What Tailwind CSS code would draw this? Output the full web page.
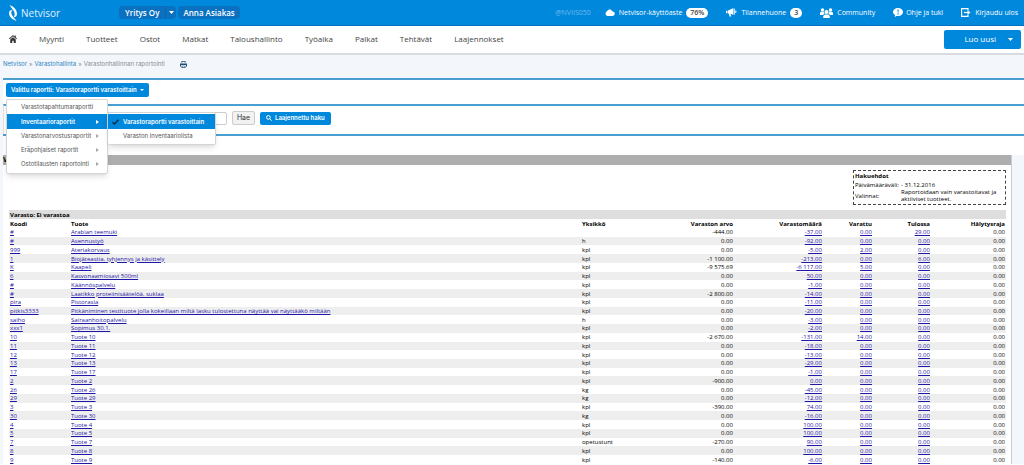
<!DOCTYPE html>
<html lang="fi">
<head>
<meta charset="utf-8">
<title>Netvisor</title>
<script src="https://cdn.jsdelivr.net/npm/@tailwindcss/browser@4"></script>
</head>
<body class="h-screen overflow-hidden bg-white font-['Open_Sans','Noto_Sans',sans-serif] text-[#444]">
<header class="flex h-[26px] items-center border-b border-[#0a6fbd] bg-[#0088dd] pr-[6px] pl-[9px] text-[7px] text-white">
  <a href="#" class="flex w-[110px] items-center gap-1 text-[10px] leading-none text-[#e0f2ff]">
    <svg class="h-[16px] w-[8px]" viewBox="0 0 8 16" fill="#fff"><path d="M.5 0C5 1.500 8 5 8 9c0 2-1.500 3.300-3.500 3.300C6 10.500 6 8.500 5 6.500 4 4.500 2 2.500.5 0z"/><path d="M7.500 16C3 14.500 0 11.500 0 8c0-2 1.500-3.300 3.500-3.300C2 6.500 2 8 3 10c1 2 3 3.700 4.500 6z"/></svg>
    <span>Netvisor</span>
  </a>
  <div class="flex h-[13px] gap-[2px] text-[8px] leading-[13px] font-semibold">
    <div class="flex">
      <button class="rounded-l-sm bg-[#0a70c0] px-[6px]">Yritys Oy</button>
      <button aria-label="Vaihda yritys" class="flex w-[11px] items-center justify-center rounded-r-sm border-l border-[#0a66b0] bg-[#0a70c0]"><svg class="h-[3px] w-[5px]" viewBox="0 0 5 3"><path d="M0 0h5L2.500 3z" fill="#fff"/></svg></button>
    </div>
    <button class="rounded-sm bg-[#0a70c0] px-[5px]">Anna Asiakas</button>
  </div>
  <nav class="ml-auto flex items-center gap-[18px] leading-[10px] whitespace-nowrap" aria-label="Tili">
    <span class="-mr-[4px] text-[#6ebcee]">@NVIIS050</span>
    <a href="#" class="flex items-center gap-[4px]"><svg class="h-[7px] w-[10px]" viewBox="0 0 20 14" fill="#fff"><path d="M5 14a5 5 0 0 1-1-9.500A5.500 5.500 0 0 1 14 4a4.500 4.500 0 0 1 2 .8A4.700 4.700 0 0 1 15.500 14z"/></svg>Netvisor-käyttöaste<span class="rounded-full bg-white px-[4px] font-semibold text-[#444]">76%</span></a>
    <a href="#" class="flex items-center gap-[4px]"><svg class="h-[9px] w-[11px]" viewBox="0 0 22 18" fill="#fff"><path d="M0 5.500h3v5H0zM4 5l10-4.500v13L9 11.500l1.500 5.500H7L5.500 11H4zM15 1h2.500v12.500H15z"/><path d="M18.500 5a2.500 2.500 0 0 1 0 5z"/></svg>Tilannehuone<span class="rounded-full bg-white px-[4px] font-semibold text-[#444]">3</span></a>
    <a href="#" class="flex items-center gap-[4px]"><svg class="h-[10px] w-[13px]" viewBox="0 0 26 20" fill="#fff"><circle cx="5" cy="4" r="3.500"/><circle cx="21" cy="4" r="3.500"/><circle cx="13" cy="8" r="4"/><path d="M0 14V9l3-1.500h4.500L9 11l-3 3zM26 14V9l-3-1.500h-4.500L17 11l3 3zM6.500 20v-4l3-3h7l3 3v4z"/></svg>Community</a>
    <a href="#" class="flex items-center gap-[3px]"><svg class="h-[9px] w-[10px]" viewBox="0 0 20 18"><path fill="#fff" d="M10 0c6 0 10 3.500 10 8s-4 8-9 8c-1 0-2 0-3-.3L3.500 18l.7-4.200C1.500 12.500 0 10.500 0 8c0-4.500 4.500-8 10-8z"/><path fill="#0088dd" d="M9 3h2.400l-.4 6H9.400zM9 10.500h2.400V13H9z"/></svg>Ohje ja tuki</a>
    <a href="#" class="flex items-center gap-[4px]"><svg class="h-[9px] w-[10px]" viewBox="0 0 20 18" fill="none" stroke="#fff" stroke-width="2.400"><path d="M14 5V1.200H1.200v15.600H14V13"/><path d="M6 9h9"/><path d="M13.500 5.500L18.500 9l-5 3.500z" fill="#fff" stroke-width="1"/></svg>Kirjaudu ulos</a>
  </nav>
</header>
<nav class="flex h-[29px] items-center border-b-2 border-[#d8dbe0] pr-[3px] pb-px pl-[9px] text-[8px] leading-[12px]" aria-label="Päävalikko">
  <div class="flex items-center gap-[22px]">
    <a href="#" aria-label="Etusivu"><svg class="h-[8px] w-[8px]" viewBox="0 0 16 16" fill="#333"><path d="M8 0L0 7l1.300 1.500L8 2.700l6.700 5.800L16 7l-2.500-2.200V1h-2.200v1.900z"/><path d="M2.500 9L8 4.300 13.500 9v7h-4v-4.500h-3V16h-4z"/></svg></a>
    <a href="#">Myynti</a><a href="#">Tuotteet</a><a href="#">Ostot</a><a href="#">Matkat</a><a href="#">Taloushallinto</a><a href="#">Työaika</a><a href="#">Palkat</a><a href="#">Tehtävät</a><a href="#">Laajennokset</a>
  </div>
  <button class="ml-auto flex h-[19px] w-[77px] items-center justify-end gap-[12px] rounded-xs bg-[#0088dd] pr-[8px] text-white">Luo uusi<svg class="h-[3px] w-[5px]" viewBox="0 0 5 3"><path d="M0 0h5L2.500 3z" fill="#fff"/></svg></button>
</nav>
<div class="flex h-[23px] items-center gap-[2px] bg-[#f3f6fa] pb-[5px] pl-[3px] font-['Inter','Liberation_Sans',sans-serif] text-[6px] leading-[10px] text-[#888f98]">
  <a href="#" class="text-[#2a86c4]">Netvisor</a><span>»</span><a href="#" class="text-[#2a86c4]">Varastohallinta</a><span>»</span><span>Varastonhallinnan raportointi</span>
  <button aria-label="Tulosta" class="ml-[13px]"><svg class="h-[7px] w-[7px]" viewBox="0 0 14 14"><path fill="#1d4f78" d="M3 0h8v4H3zM0 5h14v6h-2V8H2v3H0zM3 9.500h8V14H3z"/><path fill="#fff" d="M4.500 1.500h5V4h-5zM4.500 10.500h5v2h-5z"/></svg></button>
</div>
<main class="bg-[#f3f6fa] pl-[3px]">
  <div class="border-t-2 border-[#4a9fd0] bg-white font-['Inter','Liberation_Sans',sans-serif] text-[6px] leading-[10px]">
    <div class="relative flex h-[24px] items-center pb-[4px] pl-[3px]">
      <button class="flex h-[14px] items-center gap-[3px] rounded-xs bg-[#0088dd] px-[5px] font-semibold text-white">Valittu raportti: Varastoraportti varastoittain<svg class="h-[2px] w-[4px]" viewBox="0 0 4 2"><path d="M0 0h4L2 2z" fill="#fff"/></svg></button>
      <div class="absolute top-[19px] left-[3px] z-10 flex items-start">
        <ul class="w-[102px] rounded-xs border border-[#d5d5d5] bg-white pb-[2px] text-[#555] shadow-md">
          <li><a href="#" class="flex h-[14px] items-center pl-[14px]">Varastotapahtumaraportti</a></li>
          <li><a href="#" class="flex h-[15px] items-center justify-between bg-[#0088dd] pr-[8px] pl-[14px] font-semibold text-white">Inventaarioraportit<svg class="h-[4px] w-[3px]" viewBox="0 0 3 4"><path d="M0 0l3 2-3 2z" fill="#fff"/></svg></a></li>
          <li><a href="#" class="flex h-[14px] items-center justify-between pr-[8px] pl-[14px]">Varastonarvostusraportit<svg class="h-[4px] w-[3px]" viewBox="0 0 3 4"><path d="M0 0l3 2-3 2z" fill="#aaa"/></svg></a></li>
          <li><a href="#" class="flex h-[14px] items-center justify-between pr-[8px] pl-[14px]">Eräpohjaiset raportit<svg class="h-[4px] w-[3px]" viewBox="0 0 3 4"><path d="M0 0l3 2-3 2z" fill="#aaa"/></svg></a></li>
          <li><a href="#" class="flex h-[14px] items-center justify-between pr-[8px] pl-[14px]">Ostotilausten raportointi<svg class="h-[4px] w-[3px]" viewBox="0 0 3 4"><path d="M0 0l3 2-3 2z" fill="#aaa"/></svg></a></li>
        </ul>
        <ul class="mt-[13px] w-[108px] rounded-xs border border-l-0 border-[#d5d5d5] bg-white py-px text-[#555] shadow-md">
          <li><a href="#" class="flex h-[15px] items-center gap-[4px] bg-[#0088dd] pl-[4px] font-semibold text-white"><svg class="h-[6px] w-[7px]" viewBox="0 0 14 12"><path d="M1 6.500L5 10 13 1.500" fill="none" stroke="#0a2c4a" stroke-width="3"/></svg>Varastoraportti varastoittain</a></li>
          <li><a href="#" class="flex h-[14px] items-center pl-[15px]">Varaston inventaariolista</a></li>
        </ul>
      </div>
    </div>
    <form class="flex h-[30px] items-center border-t-2 border-l border-[#4a9fd0] border-l-[#dfe3e8] pb-[4px] pl-[30px]">
      <input type="text" aria-label="Haku" class="h-[13px] w-[193px] rounded-xs border border-[#ccc] bg-white px-1">
      <button type="button" class="ml-[5px] h-[14px] w-[23px] rounded-xs border border-[#ccc] bg-[#f2f2f2] text-[7px] leading-[12px] text-[#333]">Hae</button>
      <button type="button" class="ml-[5px] flex h-[13px] items-center gap-[3px] rounded-xs bg-[#0088dd] px-[6px] font-semibold text-white"><svg class="h-[6px] w-[6px]" viewBox="0 0 12 12" fill="none" stroke="#fff" stroke-width="2"><circle cx="4.800" cy="4.800" r="3.700"/><path d="M7.500 7.500L11.300 11.300"/></svg>Laajennettu haku</button>
    </form>
    <div class="h-[21px] border-t-2 border-[#4a9fd0]"></div>
  </div>
  <section class="mr-[12px] border-r border-[#c8ccd2] bg-white text-[6px] leading-[8px] text-black">
    <h1 aria-label="Varastoraportti" class="h-[10px] bg-[#aeaeae] text-[7px] leading-[10px] font-bold">V</h1>
    <div class="flex justify-end pt-[5px] pr-[5px] pb-[5px]">
      <dl class="grid w-[153px] grid-cols-[46px_1fr] items-center border border-dashed border-[#444] pt-px pb-px pl-px leading-[7px]">
        <dt class="col-span-2 leading-[9px] font-bold">Hakuehdot</dt><dd class="hidden"></dd>
        <dt class="leading-[8px]">Päivämääräväli:</dt><dd class="leading-[8px]">- 31.12.2016</dd>
        <dt>Valinnat:</dt><dd>Raportoidaan vain varastoitavat ja<br>aktiiviset tuotteet.</dd>
      </dl>
    </div>
    <div class="pr-[5px] pl-[6px]">
      <table class="h-[254px] w-full table-fixed border-collapse text-right">
        <colgroup><col class="w-[61px]"><col><col class="w-[60px]"><col class="w-[93px]"><col class="w-[89px]"><col class="w-[50px]"><col class="w-[58px]"><col class="w-[75px]"></colgroup>
        <thead>
          <tr class="h-[9px] bg-[#dedede]"><th colspan="8" class="px-px py-0 text-left">Varasto: Ei varastoa</th></tr>
          <tr class="h-[9px]"><th class="px-px py-0 text-left">Koodi</th><th class="px-px py-0 text-left">Tuote</th><th class="px-px py-0 text-left">Yksikkö</th><th class="px-px py-0">Varaston arvo</th><th class="px-px py-0">Varastomäärä</th><th class="px-px py-0">Varattu</th><th class="px-px py-0">Tulossa</th><th class="px-px py-0">Hälytysraja</th></tr>
        </thead>
        <tbody id="rows"></tbody>
      </table>
    </div>
  </section>
</main>
<script>
const items = [
  ['#', 'Arabian teemuki', '', '-444.00', '-37.00', '0.00', '29.00'],
  ['#', 'Asennustyö', 'h', '0.00', '-92.00', '0.00', '0.00'],
  ['999', 'Ateriakorvaus', 'kpl', '0.00', '-5.00', '2.00', '0.00'],
  ['1', 'Biojäteastia, tyhjennys ja käsittely', 'kpl', '-1 100.00', '-213.00', '0.00', '6.00'],
  ['K', 'Kaapeli', 'kpl', '-9 575.69', '-6 117.00', '5.00', '0.00'],
  ['6', 'Kasvonaamiosavi 500ml', 'kpl', '0.00', '50.00', '0.00', '0.00'],
  ['#', 'Käännöspalvelu', 'kpl', '0.00', '-1.00', '0.00', '0.00'],
  ['#', 'Laatikko proteiinisäätelöä, suklaa', 'kpl', '-2 800.00', '-14.00', '0.00', '0.00'],
  ['pira', 'Pistorasia', 'kpl', '0.00', '-11.00', '0.00', '0.00'],
  ['pitkis3333', 'Pitkäniminen testituote jolla kokeillaan miltä lasku tulostettuna näyttää vai näyttääkö miltään', 'kpl', '0.00', '-20.00', '0.00', '0.00'],
  ['saiho', 'Sairaanhoitopalvelu', 'h', '0.00', '-3.00', '0.00', '0.00'],
  ['xxx1', 'Sopimus 30.1.', 'kpl', '0.00', '-2.00', '0.00', '0.00'],
  ['10', 'Tuote 10', 'kpl', '-2 670.00', '-131.00', '14.00', '0.00'],
  ['11', 'Tuote 11', 'kpl', '0.00', '-18.00', '0.00', '0.00'],
  ['12', 'Tuote 12', 'kpl', '0.00', '-13.00', '0.00', '0.00'],
  ['13', 'Tuote 13', 'kpl', '0.00', '-29.00', '0.00', '0.00'],
  ['17', 'Tuote 17', 'kpl', '0.00', '-1.00', '0.00', '0.00'],
  ['2', 'Tuote 2', 'kpl', '-900.00', '0.00', '0.00', '0.00'],
  ['26', 'Tuote 26', 'kg', '0.00', '-45.00', '0.00', '0.00'],
  ['29', 'Tuote 29', 'kg', '0.00', '-12.00', '0.00', '0.00'],
  ['3', 'Tuote 3', 'kpl', '-390.00', '74.00', '0.00', '0.00'],
  ['30', 'Tuote 30', 'kg', '0.00', '-16.00', '0.00', '0.00'],
  ['4', 'Tuote 4', 'kpl', '0.00', '100.00', '0.00', '0.00'],
  ['5', 'Tuote 5', 'kpl', '0.00', '100.00', '0.00', '0.00'],
  ['7', 'Tuote 7', 'opetustunt', '-270.00', '90.00', '0.00', '0.00'],
  ['8', 'Tuote 8', 'kpl', '0.00', '100.00', '0.00', '0.00'],
  ['9', 'Tuote 9', 'kpl', '-140.00', '-6.00', '0.00', '0.00']
];
const link = t => `<a href="#" class="text-[#1f17a8] underline">${t}</a>`;
document.getElementById('rows').innerHTML = items.map(([code, name, unit, value, qty, reserved, incoming]) => `
  <tr class="even:bg-[#eeeeee]">
    <td class="px-px py-0 text-left">${link(code)}</td>
    <td class="px-px py-0 text-left whitespace-nowrap">${link(name)}</td>
    <td class="px-px py-0 text-left">${unit}</td>
    <td class="px-px py-0">${value}</td>
    <td class="px-px py-0">${link(qty)}</td>
    <td class="px-px py-0">${link(reserved)}</td>
    <td class="px-px py-0">${link(incoming)}</td>
    <td class="px-px py-0">0.00</td>
  </tr>`).join('');
</script>
</body>
</html>
